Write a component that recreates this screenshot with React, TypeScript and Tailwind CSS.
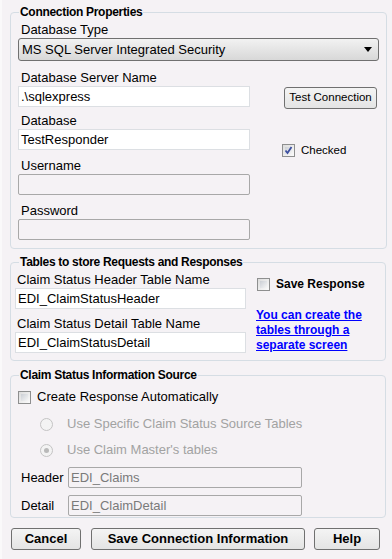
import React from "react";

function CheckBox({ checked = false }: { checked?: boolean }) {
  return (
    <span className="relative block w-[13px] h-[13px] border border-[#8e8f8f] bg-gradient-to-br from-[#dcdcdc] to-[#fbfbfb] shrink-0">
      <span className="absolute inset-[2px] bg-gradient-to-br from-[#cbcfd5] to-[#f6f6f6]" />
      {checked && (
        <svg className="absolute inset-0" width="11" height="11" viewBox="0 0 11 11">
          <path d="M2.5 5.5 L4.5 8 L8.5 2" fill="none" stroke="#3c4fa0" strokeWidth="1.8" />
        </svg>
      )}
    </span>
  );
}

function Radio({ checked = false }: { checked?: boolean }) {
  return (
    <span className="relative block w-[13px] h-[13px] rounded-full border border-[#c4c4c4] bg-[#f3f3f3] shrink-0">
      {checked && <span className="absolute left-[3px] top-[3px] w-[5px] h-[5px] rounded-full bg-[#b9b9b9]" />}
    </span>
  );
}

const label = "block h-[16px] leading-[16px] text-[13px] text-black";
const inputOn =
  "h-[21px] bg-white border border-[#dcdfe3] pl-[2px] text-[13px] leading-[19px] text-black";
const inputOff = "h-[21px] bg-[#f5f2f5] border border-[#a8a8a8] rounded-[2px] pl-[2px] text-[13px] leading-[19px] text-[#7a7a7a]";
const legend = "px-[1px] text-[12px] leading-[14px] font-bold text-black tracking-[-0.3px]";
const btn =
  "h-[22px] border border-[#707070] rounded-[3px] bg-gradient-to-b from-[#f4f4f4] to-[#e4e4e4] text-black flex items-center justify-center";

export default function App() {
  return (
    <div className="w-[392px] h-[559px] bg-[#f5f2f5] overflow-hidden font-['Liberation_Sans',Arial,sans-serif] pl-[10px] pr-[6px] pt-[5px] border-l-2 border-[#faf9fa]">
      <div className="-ml-[2px]">
        {/* Group 1 */}
        <fieldset className="border border-[#d5dde4] rounded-[4px] pl-[7px] pr-[7px] pb-[8px] h-[244px]">
          <legend className={legend + " ml-[1px]"}>Connection Properties</legend>
          <span className={label + " mt-[3px] pl-[3px]"}>Database Type</span>
          <div className="h-[23px] w-[361px] border border-[#707070] rounded-[3px] bg-gradient-to-b from-[#f2f2f2] to-[#d8d8d8] flex items-center justify-between pl-[3px] pr-[6px] text-[13px] text-black">
            <span>MS SQL Server Integrated Security</span>
            <svg width="8" height="5" viewBox="0 0 8 5">
              <path d="M0 0 H8 L4 5 Z" fill="#000" />
            </svg>
          </div>
          <span className={label + " mt-[9px] pl-[3px]"}>Database Server Name</span>
          <div className="flex items-start h-[21px]">
            <div className={inputOn + " w-[232px]"}>.\sqlexpress</div>
            <div className={btn + " ml-[34px] mt-[1px] w-[93px] text-[11.5px]"}>Test Connection</div>
          </div>
          <span className={label + " mt-[6px] pl-[3px]"}>Database</span>
          <div className="flex items-start h-[21px]">
            <div className={inputOn + " w-[232px]"}>TestResponder</div>
            <div className="ml-[32px] mt-[15px] flex items-center gap-[6px]">
              <CheckBox checked />
              <span className="text-[11.5px] leading-[13px] text-black">Checked</span>
            </div>
          </div>
          <span className={label + " mt-[8px] pl-[3px]"}>Username</span>
          <div className={inputOff + " w-[232px]"} />
          <span className={label + " mt-[8px] pl-[3px]"}>Password</span>
          <div className={inputOff + " w-[232px]"} />
        </fieldset>

        {/* Group 2 */}
        <fieldset className="mt-[6px] border border-[#d5dde4] rounded-[4px] pl-[4px] pr-[7px] h-[106px]">
          <legend className={legend + " ml-[4px]"}>Tables to store Requests and Responses</legend>
          <div className="flex">
            <div className="w-[231px]">
              <span className={label + " mt-[3px] pl-[2px]"}>Claim Status Header Table Name</span>
              <div className={inputOn + " w-[231px]"}>EDI_ClaimStatusHeader</div>
              <span className={label + " mt-[7px] pl-[2px]"}>Claim Status Detail Table Name</span>
              <div className={inputOn + " w-[231px]"}>EDI_ClaimStatusDetail</div>
            </div>
            <div className="ml-[10px]">
              <div className="flex items-center gap-[6px] mt-[8px] ml-[1px]">
                <CheckBox />
                <span className="text-[12px] font-bold leading-[14px] text-black">Save Response</span>
              </div>
              <div className="mt-[17px] text-[12px] leading-[15px] font-bold text-[#0000ff] underline w-[115px]">
                You can create the tables through a separate screen
              </div>
            </div>
          </div>
        </fieldset>

        {/* Group 3 */}
        <fieldset className="mt-[7px] border border-[#d5dde4] rounded-[4px] pl-[7px] pr-[7px] h-[150px]">
          <legend className={legend + " ml-[1px]"}>Claim Status Information Source</legend>
          <div className="flex items-center gap-[6px] mt-[8px]">
            <CheckBox />
            <span className="text-[13px] leading-[14px] text-black">Create Response Automatically</span>
          </div>
          <div className="flex items-center gap-[14px] mt-[13px] ml-[22px]">
            <Radio />
            <span className="text-[13px] leading-[14px] text-[#a2a2a2]">Use Specific Claim Status Source Tables</span>
          </div>
          <div className="flex items-center gap-[14px] mt-[12px] ml-[22px]">
            <Radio checked />
            <span className="text-[13px] leading-[14px] text-[#a2a2a2]">Use Claim Master's tables</span>
          </div>
          <div className="flex items-center mt-[10px] h-[21px]">
            <span className="w-[50px] pl-[3px] text-[13px] text-black">Header</span>
            <div className={inputOff + " w-[234px]"}>EDI_Claims</div>
          </div>
          <div className="flex items-center mt-[7px] h-[21px]">
            <span className="w-[50px] pl-[3px] text-[13px] text-black">Detail</span>
            <div className={inputOff + " w-[234px]"}>EDI_ClaimDetail</div>
          </div>
        </fieldset>

        {/* Buttons */}
        <div className="flex mt-[10px] ml-[1px] text-[13px] font-bold">
          <div className={btn + " w-[70px]"}>Cancel</div>
          <div className={btn + " w-[214px] ml-[10px]"}>Save Connection Information</div>
          <div className={btn + " w-[66px] ml-[9px]"}>Help</div>
        </div>
      </div>
    </div>
  );
}
